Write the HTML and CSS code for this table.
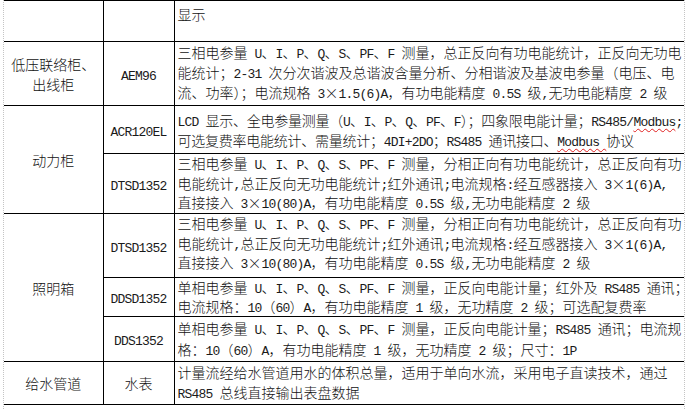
FILE: index.html
```html
<!DOCTYPE html>
<html lang="zh-CN">
<head>
<meta charset="utf-8">
<title>电能计量设备配置表</title>
<link rel="stylesheet" href="styles.css">
</head>
<body>
<div class="page">
<table class="spec">
  <colgroup>
    <col class="c1">
    <col class="c2">
    <col class="c3">
  </colgroup>
  <tr class="h0">
    <td class="cat"></td>
    <td class="model"></td>
    <td class="desc">显示</td>
  </tr>
  <tr class="h1">
    <td class="cat">低压联络柜、<br>出线柜</td>
    <td class="model"><span class="e">AEM96</span></td>
    <td class="desc">三相电参量<span class="e"> U</span>、<span class="e">I</span>、<span class="e">P</span>、<span class="e">Q</span>、<span class="e">S</span>、<span class="e">PF</span>、<span class="e">F </span>测量，总正反向有功电能统计，正反向无功电<br>能统计；<span class="e">2-31 </span>次分次谐波及总谐波含量分析、分相谐波及基波电参量（电压、电<br>流、功率）；电流规格<span class="e"> 3</span>×<span class="e">1.5(6)A</span>，有功电能精度<span class="e"> 0.5S </span>级<span class="e">,</span>无功电能精度<span class="e"> 2 </span>级</td>
  </tr>
  <tr class="h2">
    <td class="cat" rowspan="2">动力柜</td>
    <td class="model"><span class="e">ACR120EL</span></td>
    <td class="desc tight"><span class="e">LCD </span>显示、全电参量测量（<span class="e">U</span>、<span class="e">I</span>、<span class="e">P</span>、<span class="e">Q</span>、<span class="e">PF</span>、<span class="e">F</span>）；四象限电能计量；<span class="e">RS485/<span class="spell">Modbus</span>;</span><br>可选复费率电能统计、需量统计；<span class="e">4DI+2DO</span>；<span class="e">RS485 </span>通讯接口、<span class="e"><span class="spell">Modbus </span></span>协议</td>
  </tr>
  <tr class="h3">
    <td class="model"><span class="e">DTSD1352</span></td>
    <td class="desc">三相电参量<span class="e"> U</span>、<span class="e">I</span>、<span class="e">P</span>、<span class="e">Q</span>、<span class="e">S</span>、<span class="e">PF</span>、<span class="e">F </span>测量，分相正向有功电能统计，总正反向有功<br>电能统计<span class="e">,</span>总正反向无功电能统计<span class="e">;</span>红外通讯<span class="e">;</span>电流规格<span class="e">:</span>经互感器接入<span class="e"> 3</span>×<span class="e">1(6)A,</span><br>直接接入<span class="e"> 3</span>×<span class="e">10(80)A</span>，有功电能精度<span class="e"> 0.5S </span>级<span class="e">,</span>无功电能精度<span class="e"> 2 </span>级</td>
  </tr>
  <tr class="h4">
    <td class="cat" rowspan="3">照明箱</td>
    <td class="model"><span class="e">DTSD1352</span></td>
    <td class="desc">三相电参量<span class="e"> U</span>、<span class="e">I</span>、<span class="e">P</span>、<span class="e">Q</span>、<span class="e">S</span>、<span class="e">PF</span>、<span class="e">F </span>测量，分相正向有功电能统计，总正反向有功<br>电能统计<span class="e">,</span>总正反向无功电能统计<span class="e">;</span>红外通讯<span class="e">;</span>电流规格<span class="e">:</span>经互感器接入<span class="e"> 3</span>×<span class="e">1(6)A,</span><br>直接接入<span class="e"> 3</span>×<span class="e">10(80)A</span>，有功电能精度<span class="e"> 0.5S </span>级<span class="e">,</span>无功电能精度<span class="e"> 2 </span>级</td>
  </tr>
  <tr class="h5">
    <td class="model"><span class="e">DDSD1352</span></td>
    <td class="desc">单相电参量<span class="e"> U</span>、<span class="e">I</span>、<span class="e">P</span>、<span class="e">Q</span>、<span class="e">S</span>、<span class="e">PF</span>、<span class="e">F </span>测量，正反向电能计量；红外及<span class="e"> RS485 </span>通讯；<br>电流规格：<span class="e">10</span>（<span class="e">60</span>）<span class="e">A</span>，有功电能精度<span class="e"> 1 </span>级，无功精度<span class="e"> 2 </span>级；可选配复费率</td>
  </tr>
  <tr class="h6">
    <td class="model"><span class="e">DDS1352</span></td>
    <td class="desc">单相电参量<span class="e"> U</span>、<span class="e">I</span>、<span class="e">P</span>、<span class="e">Q</span>、<span class="e">S</span>、<span class="e">PF</span>、<span class="e">F </span>测量，正反向电能计量；<span class="e">RS485 </span>通讯；电流规<br>格：<span class="e">10</span>（<span class="e">60</span>）<span class="e">A</span>，有功电能精度<span class="e"> 1 </span>级，无功精度<span class="e"> 2 </span>级；尺寸：<span class="e">1P</span></td>
  </tr>
  <tr class="h7">
    <td class="cat">给水管道</td>
    <td class="model">水表</td>
    <td class="desc">计量流经给水管道用水的体积总量，适用于单向水流，采用电子直读技术，通过<br><span class="e">RS485 </span>总线直接输出表盘数据</td>
  </tr>
</table>
</div>
</body>
</html>
```

FILE: styles.css
```css
html, body {
  margin: 0;
  padding: 0;
  background: #ffffff;
}

body {
  font-family: "Noto Sans CJK SC", "Noto Sans", sans-serif;
  font-size: 14px;
  font-weight: 300;
  color: #111111;
}

.page {
  margin-left: 3px;
  width: 680px;
  height: 409px;
  border-left: 1px dotted #c4c4c4;
  border-right: 1px dotted #c4c4c4;
}

.spec {
  width: 680px;
  border-collapse: collapse;
  table-layout: fixed;
}

.c1 { width: 99px; }
.c2 { width: 71px; }
.c3 { width: 510px; }

.spec td {
  border-top: 1px solid #000;
  border-bottom: 1px solid #000;
  padding: 0 3px;
  vertical-align: middle;
  line-height: 20px;
}

.cat {
  text-align: center;
  border-right: 1px solid #000;
}

.model {
  text-align: center;
  border-right: 1px solid #000;
  border-left: 1px solid #000;
}

.desc {
  text-align: left;
  white-space: nowrap;
}

.tight {
  letter-spacing: -0.25px;
}

.e {
  font-family: "Liberation Mono", "DejaVu Sans Mono", monospace;
  font-size: 13px;
  font-weight: 400;
  letter-spacing: -0.8px;
  line-height: 10px;
  color: #1a1a1a;
}

.spell {
  text-decoration: underline wavy #e02020;
  text-decoration-thickness: 1px;
  text-underline-offset: 2px;
}

.h0 { height: 41px; }
.h0 .desc { vertical-align: top; padding-top: 3px; }

.h1 { height: 64px; }
.h1 .desc { vertical-align: top; }

.h2 { height: 48px; }

.h3 { height: 60px; }
.h3 .desc { line-height: 19.5px; }

.h4 { height: 64px; }
.h4 .desc { vertical-align: top; line-height: 19.5px; }

.h5 { height: 39px; }
.h5 .desc { line-height: 19px; }

.h6 { height: 45px; }
.h6 .desc { line-height: 21px; }

.h7 { height: 43px; }
.h7 .desc { vertical-align: top; }
```
